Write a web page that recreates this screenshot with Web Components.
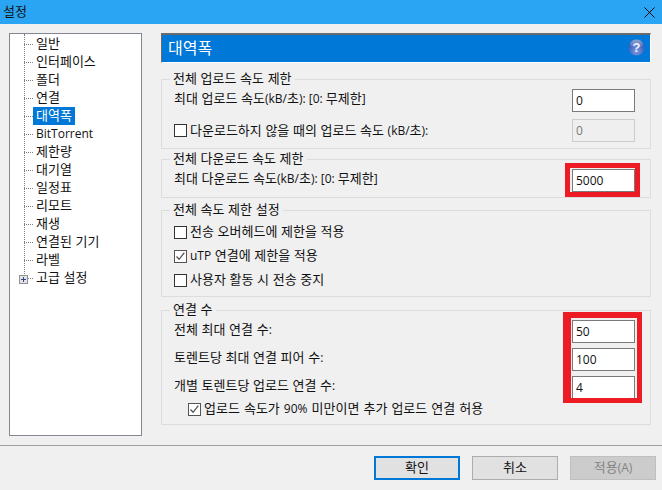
<!DOCTYPE html>
<html lang="ko">
<head>
<meta charset="utf-8">
<title>설정</title>
<style>
  html, body { margin: 0; padding: 0; background: #f0f0f0; }
  body { font: 13px/18px "Noto Sans CJK KR", "Liberation Sans", sans-serif; color: #111; }
</style>
</head>
<body>
<settings-dialog></settings-dialog>
<script>
class Base extends HTMLElement {
  constructor() {
    super();
    this.attachShadow({ mode: "open" });
  }
  connectedCallback() {
    this.shadowRoot.innerHTML = `<style>${this.styles}</style>${this.markup}`;
  }
}

class TitleBar extends Base {
  get styles() {
    return `
      :host { display: flex; align-items: center; justify-content: space-between; height: 24px; background: #2aa5f4; padding: 0 7px 0 3px; box-sizing: border-box; }
      span { padding-bottom: 2px; }
      svg { display: block; }
    `;
  }
  get markup() {
    return `<span><slot></slot></span>
      <svg width="11" height="11" viewBox="0 0 11 11"><path d="M.5.5l10 10M10.5.5l-10 10" stroke="#000" fill="none"/></svg>`;
  }
}

class TreeItem extends Base {
  get styles() {
    return `
      :host { display: flex; height: 18px; align-items: center; position: relative; }
      :host::before { content: ""; position: absolute; left: 14px; top: 9px; width: 9px; border-top: 1px dotted #808080; }
      :host::after { content: ""; position: absolute; left: 14px; top: -9px; height: 18px; border-left: 1px dotted #808080; }
      :host([first])::after { top: -1px; height: 10px; }
      .label { margin-left: 23px; padding: 0 3px; height: 18px; line-height: 15px; white-space: nowrap; }
      :host([selected]) .label { background: #0078d7; color: #fff; }
      .plus { position: absolute; left: 9px; top: 6px; width: 7px; height: 7px; border: 1px solid #919191; background: #e4e4e4; z-index: 1; }
      .plus::before { content: ""; position: absolute; left: 1px; top: 3px; width: 5px; height: 1px; background: #36428a; }
      .plus::after { content: ""; position: absolute; left: 3px; top: 1px; width: 1px; height: 5px; background: #36428a; }
    `;
  }
  get markup() {
    const plus = this.hasAttribute("expandable") ? `<span class="plus"></span>` : "";
    return `${plus}<span class="label"><slot></slot></span>`;
  }
}

class TreeNav extends Base {
  get styles() {
    return `
      :host { display: block; width: 133px; height: 403px; box-sizing: border-box; border: 1px solid #828790; background: #fff; padding: 1px 0 0; flex: none; }
    `;
  }
  get markup() {
    return `<slot></slot>`;
  }
}

class PaneHeader extends Base {
  get styles() {
    return `
      :host { display: flex; align-items: center; justify-content: space-between; box-sizing: border-box; height: 30px; background: #0078d7; color: #fff;
        border-style: solid; border-width: 2px 1px 1px 1px; border-color: #6b6b6b #fff #fff #6b6b6b; padding: 0 6px; font-size: 16px; }
      span { padding-bottom: 4px; }
      svg { display: block; margin-bottom: 2px; margin-right: -1px; }
      text { font: 700 13px "Liberation Sans", sans-serif; }
    `;
  }
  get markup() {
    return `<span><slot></slot></span>
      <svg width="17" height="17" viewBox="0 0 17 17">
        <defs>
          <radialGradient id="g" cx=".5" cy=".75" r=".8"><stop offset="0" stop-color="#7f9de2"/><stop offset=".55" stop-color="#4469c2"/><stop offset="1" stop-color="#2f4fa3"/></radialGradient>
          <linearGradient id="s" x1="0" y1="0" x2="0" y2="1"><stop offset="0" stop-color="#fff" stop-opacity=".45"/><stop offset="1" stop-color="#fff" stop-opacity="0"/></linearGradient>
        </defs>
        <circle cx="8.5" cy="8.5" r="8" fill="url(#g)"/>
        <ellipse cx="8.5" cy="5" rx="6.5" ry="4.4" fill="url(#s)"/>
        <text x="8.5" y="13.2" text-anchor="middle" fill="#eef3ff">?</text>
      </svg>`;
  }
}

class GroupBox extends Base {
  get styles() {
    return `
      :host { display: block; }
      fieldset { margin: 0; min-width: 0; box-sizing: border-box; border: 1px solid #dcdcdc; padding: 2px 15px 0 12px; height: var(--h); display: flex; flex-direction: column; }
      legend { padding: 0 3px; margin-left: -4px; line-height: 14px; height: 16px; white-space: nowrap; }
    `;
  }
  get markup() {
    return `<fieldset style="--h:${this.getAttribute("height")}px"><legend>${this.getAttribute("legend")}</legend><slot></slot></fieldset>`;
  }
}

class FieldRow extends Base {
  get styles() {
    return `
      :host { display: flex; align-items: center; justify-content: space-between; height: 23px; margin-bottom: var(--gap, 7px); }
      .val { width: 63px; height: 23px; box-sizing: border-box; border: 1px solid #7a7a7a; background: #fff; padding: 0 3px; font: 12px/21px "Open Sans", sans-serif; }
      :host([disabled]) .val { border: 1px solid #cccccc; background: #efefef; color: #7a7a7a; }
      .lab { white-space: nowrap; padding-bottom: 5px; }
      :host([disabled]) .lab { padding-bottom: 0; }
    `;
  }
  get markup() {
    const value = this.getAttribute("value");
    return `<span class="lab"><slot></slot></span><span class="val">${value}</span>`;
  }
}

class CheckRow extends Base {
  get styles() {
    return `
      :host { display: flex; align-items: center; height: var(--row, 24px); white-space: nowrap; }
      .box { width: 13px; height: 13px; box-sizing: border-box; border: 1px solid #333; background: #fff; margin-right: 3px; flex: none; }
      :host([checked]) .box { border-color: #555; }
      svg { display: block; }
      .txt { padding-bottom: 2px; }
    `;
  }
  get markup() {
    const tick = this.hasAttribute("checked")
      ? `<svg width="11" height="11" viewBox="0 0 11 11"><path d="M1.5 5.5l2.6 2.8 5.2-6.6" fill="none" stroke="#555" stroke-width="1.3"/></svg>`
      : "";
    return `<span class="box">${tick}</span><span class="txt"><slot></slot></span>`;
  }
}

class DlgButton extends Base {
  get styles() {
    return `
      :host { display: flex; align-items: center; justify-content: center; width: 86px; height: 24px; box-sizing: border-box; border: 1px solid #adadad; background: #e1e1e1; padding-bottom: 2px; }
      :host([primary]) { border: 2px solid #0078d7; }
      :host([disabled]) { background: #cccccc; border-color: #bfbfbf; color: #838383; }
    `;
  }
  get markup() {
    return `<slot></slot>`;
  }
}

class DialogFooter extends Base {
  get styles() {
    return `
      :host { display: flex; justify-content: flex-end; gap: 12px; box-sizing: border-box; height: 45px; border-top: 1px solid #a0a0a0; padding: 10px 6px 0 0; }
    `;
  }
  get markup() {
    return `<slot></slot>`;
  }
}

class RedMark extends Base {
  get styles() {
    return `
      :host { position: absolute; box-sizing: border-box; border: solid #ed1c24; pointer-events: none; display: block; }
    `;
  }
  get markup() {
    return ``;
  }
}

class SettingsDialog extends Base {
  get styles() {
    return `
      :host { display: flex; flex-direction: column; width: 662px; height: 490px; position: relative; overflow: hidden; background: #f0f0f0; }
      .main { display: flex; gap: 19px; height: 421px; box-sizing: border-box; padding: 9px 11px 0 9px; }
      .pane { flex: 1; display: flex; flex-direction: column; min-width: 0; }
      pane-header { margin-bottom: 8px; }
      .g1 { margin-bottom: 2px; }
      .g2 { margin-bottom: 4px; }
      .g3 { margin-bottom: 5px; }
      .last { margin-top: -2px; word-spacing: .4px; }
      .indent { margin-left: 14px; }
      .l { font: 12px "Open Sans", sans-serif; }
    `;
  }
  get markup() {
    const l = s => `<span class="l">${s}</span>`;
    const nav = ["일반", "인터페이스", "폴더", "연결", "대역폭", l("BitTorrent"), "제한량", "대기열", "일정표", "리모트", "재생", "연결된 기기", "라벨"];
    const items = nav.map((t, i) =>
      `<tree-item${i === 0 ? " first" : ""}${t === "대역폭" ? " selected" : ""}>${t}</tree-item>`).join("");
    const rate = w => `최대 ${w} 속도${l("(kB/")}초${l("): [0: ")}무제한${l("]")}`;
    return `
      <title-bar>설정</title-bar>
      <div class="main">
        <tree-nav>${items}<tree-item expandable>고급 설정</tree-item></tree-nav>
        <div class="pane">
          <pane-header>대역폭</pane-header>
          <group-box class="g1" legend="전체 업로드 속도 제한" height="78">
            <field-row value="0">${rate("업로드")}</field-row>
            <field-row value="0" disabled><check-row>다운로드하지 않을 때의 업로드 속도 ${l("(kB/")}초${l("):")}</check-row></field-row>
          </group-box>
          <group-box class="g2" legend="전체 다운로드 속도 제한" height="47">
            <field-row value="5000">${rate("다운로드")}</field-row>
          </group-box>
          <group-box class="g3" legend="전체 속도 제한 설정" height="95">
            <check-row>전송 오버헤드에 제한을 적용</check-row>
            <check-row checked>${l("uTP")} 연결에 제한을 적용</check-row>
            <check-row>사용자 활동 시 전송 중지</check-row>
          </group-box>
          <group-box legend="연결 수" height="123">
            <field-row value="50" style="--gap:5px">전체 최대 연결 수${l(":")}</field-row>
            <field-row value="100" style="--gap:5px">토렌트당 최대 연결 피어 수${l(":")}</field-row>
            <field-row value="4" style="--gap:0px">개별 토렌트당 업로드 연결 수${l(":")}</field-row>
            <check-row class="indent last" checked>업로드 속도가 ${l("90%")} 미만이면 추가 업로드 연결 허용</check-row>
          </group-box>
        </div>
      </div>
      <dialog-footer>
        <dlg-button primary>확인</dlg-button>
        <dlg-button>취소</dlg-button>
        <dlg-button disabled>적용${l("(A)")}</dlg-button>
      </dialog-footer>
      <red-mark style="left:565px;top:163px;width:75px;height:34px;border-width:5px"></red-mark>
      <red-mark style="left:563px;top:312px;width:79px;height:91px;border-width:6px 5px 5px 8px"></red-mark>
    `;
  }
}

customElements.define("title-bar", TitleBar);
customElements.define("tree-item", TreeItem);
customElements.define("tree-nav", TreeNav);
customElements.define("pane-header", PaneHeader);
customElements.define("group-box", GroupBox);
customElements.define("field-row", FieldRow);
customElements.define("check-row", CheckRow);
customElements.define("dlg-button", DlgButton);
customElements.define("dialog-footer", DialogFooter);
customElements.define("red-mark", RedMark);
customElements.define("settings-dialog", SettingsDialog);
</script>
</body>
</html>
